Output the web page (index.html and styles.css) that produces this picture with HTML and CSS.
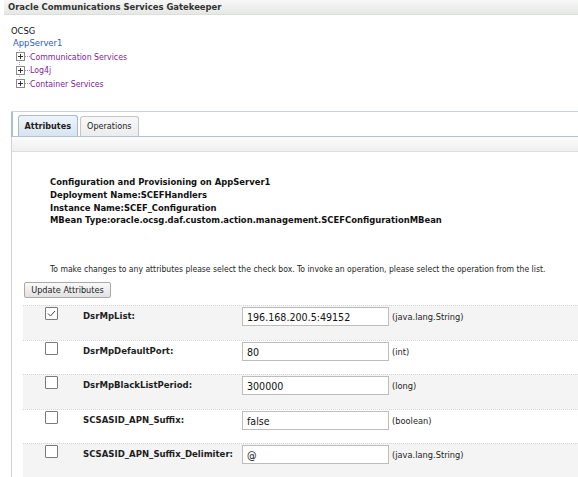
FILE: index.html
```html
<!DOCTYPE html>
<html>
<head>
<meta charset="utf-8">
<link rel="stylesheet" href="styles.css">
</head>
<body>
<div class="header">Oracle Communications Services Gatekeeper</div>
<div class="tree">
  <div class="root">OCSG</div>
  <div class="server">AppServer1</div>
  <ul class="nodes">
    <li><svg class="plus" width="14" height="9" viewBox="0 0 14 9"><rect x="0.5" y="0.5" width="8" height="8" fill="#fff" stroke="#8a8a8a"/><path d="M2 4.5h5M4.5 2v5" stroke="#333"/><path d="M9 4.5h5" stroke="#999" stroke-dasharray="1 1"/></svg><span>Communication Services</span></li>
    <li><svg class="plus" width="14" height="9" viewBox="0 0 14 9"><rect x="0.5" y="0.5" width="8" height="8" fill="#fff" stroke="#8a8a8a"/><path d="M2 4.5h5M4.5 2v5" stroke="#333"/><path d="M9 4.5h5" stroke="#999" stroke-dasharray="1 1"/></svg><span>Log4j</span></li>
    <li><svg class="plus" width="14" height="9" viewBox="0 0 14 9"><rect x="0.5" y="0.5" width="8" height="8" fill="#fff" stroke="#8a8a8a"/><path d="M2 4.5h5M4.5 2v5" stroke="#333"/><path d="M9 4.5h5" stroke="#999" stroke-dasharray="1 1"/></svg><span>Container Services</span></li>
  </ul>
</div>
<div class="panel">
  <div class="tabbar">
    <div class="tab active">Attributes</div>
    <div class="tab">Operations</div>
  </div>
  <div class="band"></div>
  <div class="content">
    <div class="info">
      <div>Configuration and Provisioning on AppServer1</div>
      <div>Deployment Name:SCEFHandlers</div>
      <div>Instance Name:SCEF_Configuration</div>
      <div>MBean Type:oracle.ocsg.daf.custom.action.management.SCEFConfigurationMBean</div>
    </div>
    <p class="hint">To make changes to any attributes please select the check box. To invoke an operation, please select the operation from the list.</p>
    <button class="btn">Update Attributes</button>
    <div class="table">
      <div class="row alt">
        <span class="cb checked"><svg width="11" height="11" viewBox="0 0 11 11"><path d="M2 5.5l2.5 2.5 4.5-5" fill="none" stroke="#444" stroke-width="1"/></svg></span>
        <span class="name">DsrMpList:</span>
        <span class="field">196.168.200.5:49152</span>
        <span class="type">(java.lang.String)</span>
      </div>
      <div class="row">
        <span class="cb"></span>
        <span class="name">DsrMpDefaultPort:</span>
        <span class="field">80</span>
        <span class="type">(int)</span>
      </div>
      <div class="row alt">
        <span class="cb"></span>
        <span class="name">DsrMpBlackListPeriod:</span>
        <span class="field">300000</span>
        <span class="type">(long)</span>
      </div>
      <div class="row">
        <span class="cb"></span>
        <span class="name">SCSASID_APN_Suffix:</span>
        <span class="field">false</span>
        <span class="type">(boolean)</span>
      </div>
      <div class="row alt">
        <span class="cb"></span>
        <span class="name">SCSASID_APN_Suffix_Delimiter:</span>
        <span class="field">@</span>
        <span class="type">(java.lang.String)</span>
      </div>
    </div>
  </div>
</div>
</body>
</html>
```

FILE: styles.css
```css
html, body {
  margin: 0;
  padding: 0;
  background: #fff;
  overflow: hidden;
}
body {
  font-family: "DejaVu Sans", "Liberation Sans", sans-serif;
  font-stretch: condensed;
  font-size: 9px;
  color: #1e1e1e;
}
.header {
  margin-left: 4px;
  height: 14px;
  padding-left: 4px;
  line-height: 13px;
  font-weight: bold;
  font-size: 9.4px;
  color: #333;
  background: linear-gradient(#f6f7f6, #e6e8e6);
  border-bottom: 1px solid #dcdedc;
}
.tree {
  padding: 9px 0 0 11px;
  height: 87px;
}
.root {
  line-height: 13px;
  font-size: 9.3px;
  color: #111;
}
.server {
  line-height: 12px;
  margin-left: 2px;
  color: #2b5cc2;
  font-size: 9.35px;
}
.nodes {
  list-style: none;
  margin: 1px 0 0 8px;
  padding: 0;
  border-left: 1px dotted #aaa;
  width: 0;
  height: 27px;
}
.nodes li {
  display: flex;
  align-items: center;
  height: 13.5px;
  white-space: nowrap;
  margin-left: -4px;
  color: #7e1d9c;
  font-size: 8.7px;
}
.plus {
  display: block;
  flex: none;
}
.panel {
  margin-left: 11px;
  border-top: 1px solid #ccd3de;
}
.tabbar {
  display: flex;
  align-items: flex-end;
  gap: 2px;
  padding-left: 5px;
  border-left: 2px solid #aebcd0;
  border-bottom: 1px solid #b3c1d6;
  box-sizing: border-box;
  height: 25px;
}
.tab {
  height: 19px;
  line-height: 19px;
  padding: 0 6.5px;
  border: 1px solid #c3c6ca;
  border-bottom: none;
  border-radius: 3px 3px 0 0;
  background: linear-gradient(#f8f8f8, #ececec);
  color: #1e1e1e;
  font-size: 9px;
}
.tab.active {
  height: 20px;
  line-height: 20px;
  padding: 0 5.5px;
  font-weight: bold;
  border-color: #a7b8cf;
  background: linear-gradient(#eef4fa, #d8e4f1);
}
.band {
  height: 14px;
  border-left: 1px solid #d3d3d3;
  border-bottom: 1px solid #dedede;
  background: linear-gradient(#fbfbfb, #efefef);
}
.content {
  border-left: 1px solid #d3d3d3;
  padding-top: 24px;
  height: 340px;
}
.info {
  margin-left: 38px;
  font-weight: bold;
  line-height: 12.8px;
  font-size: 9.35px;
  color: #111;
}
.hint {
  margin: 36px 0 0 38px;
  line-height: 13px;
  white-space: nowrap;
  font-size: 8.55px;
  color: #1e1e1e;
}
.btn {
  display: block;
  margin: 6px 0 0 12px;
  height: 16px;
  width: 87px;
  padding: 0;
  font: inherit;
  font-size: 9.1px;
  color: #1e1e1e;
  border: 1px solid #a9a9a9;
  border-radius: 2px;
  background: linear-gradient(#fafafa, #e1e1e1);
}
.table {
  margin: 7px 0 0 11px;
}
.row {
  display: grid;
  grid-template-columns: 60px 159px 150px 1fr;
  height: 34.5px;
  border-top: 1px dotted #d6d6d6;
  box-sizing: border-box;
}
.row.alt {
  background: #f4f4f4;
}
.cb {
  margin: 1px 0 0 22px;
  width: 11px;
  height: 11px;
  border: 1px solid #7a7a7a;
  border-radius: 1px;
  background: #fff;
}
.cb svg {
  display: block;
}
.name {
  font-weight: bold;
  padding-top: 4px;
  line-height: 12px;
  font-size: 9.5px;
  white-space: nowrap;
  color: #1e1e1e;
}
.field {
  margin-top: 1px;
  width: 147px;
  height: 19px;
  box-sizing: border-box;
  border: 1px solid #bdbdbd;
  background: #fff;
  padding: 0 4px;
  line-height: 18px;
  font-size: 10.6px;
  color: #111;
}
.type {
  padding-top: 5px;
  line-height: 12px;
  font-size: 9.2px;
  color: #1e1e1e;
}
```
